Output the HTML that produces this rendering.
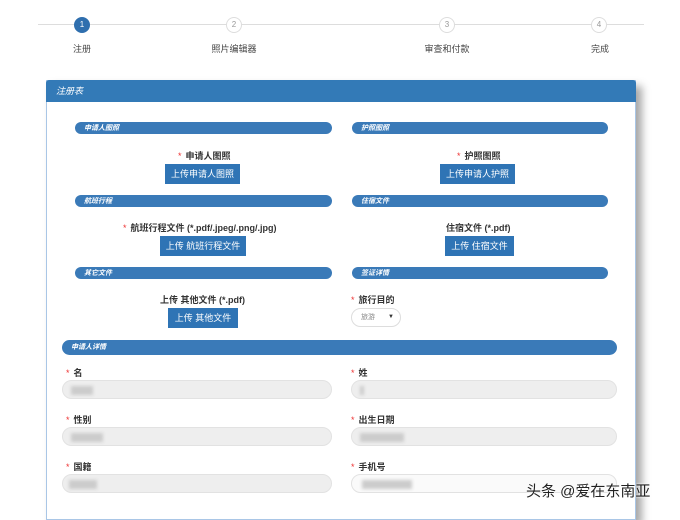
<!DOCTYPE html><html><head><meta charset="utf-8"><style>
*{margin:0;padding:0;box-sizing:border-box}
body{width:680px;height:514px;overflow:hidden;background:#fff;font-family:"Liberation Sans","Noto Sans CJK SC",sans-serif;position:relative;color:#333}
.a{position:absolute}
.c{position:absolute;width:16px;height:16px;border-radius:50%;border:1px solid #ddd;background:#fff;font-size:8px;color:#999;text-align:center;line-height:14px;top:17px}
.sl{position:absolute;font-size:9px;color:#444;top:42px;transform:translateX(-50%)}
.bar{position:absolute;height:12px;background:#3a7ab8;border-radius:6px;color:#fff;font-size:7px;font-style:italic;font-weight:bold;line-height:13px;padding-left:9px}
.btn{position:absolute;height:20px;background:#2f74b5;color:#fff;font-size:9px;line-height:20px;text-align:center}
.lb{position:absolute;font-size:9px;font-weight:bold;color:#333;white-space:nowrap}
.lb i{color:#e33;font-style:normal;margin-right:4px;font-weight:normal}
.in{position:absolute;height:19px;background:#eee;border:1px solid #e2e2e2;border-radius:10px}
.bl{position:absolute;top:5px;height:9px;background:#ccc;filter:blur(1.5px)}
</style></head><body>
<div class="a" style="left:38px;top:24px;width:606px;height:1px;background:#ddd"></div>
<div class="c" style="left:74px;background:#2f6fae;border-color:#2f6fae;color:#fff">1</div>
<div class="c" style="left:226px">2</div>
<div class="c" style="left:439px">3</div>
<div class="c" style="left:591px">4</div>
<div class="sl" style="left:82px">注册</div>
<div class="sl" style="left:234px">照片编辑器</div>
<div class="sl" style="left:447px">审查和付款</div>
<div class="sl" style="left:600px">完成</div>
<div class="a" style="left:46px;top:80px;width:590px;height:440px;border:1px solid #a9c6e6;background:#fff;box-shadow:6px 6px 8px rgba(0,0,0,.35)"></div>
<div class="a" style="left:46px;top:80px;width:590px;height:22px;background:#337ab7;border-radius:3px 3px 0 0;color:#fff;font-size:9px;font-style:italic;line-height:22px;padding-left:10px">注册表</div>
<div class="bar" style="left:75px;top:122px;width:257px">申请人图照</div>
<div class="bar" style="left:352px;top:122px;width:256px">护照图照</div>
<div class="lb" style="left:178px;top:149px"><i>*</i>申请人图照</div>
<div class="lb" style="left:457px;top:149px"><i>*</i>护照图照</div>
<div class="btn" style="left:165px;top:164px;width:75px">上传申请人图照</div>
<div class="btn" style="left:440px;top:164px;width:75px">上传申请人护照</div>
<div class="bar" style="left:75px;top:195px;width:257px">航班行程</div>
<div class="bar" style="left:352px;top:195px;width:256px">住宿文件</div>
<div class="lb" style="left:123px;top:221px"><i>*</i>航班行程文件 (*.pdf/.jpeg/.png/.jpg)</div>
<div class="lb" style="left:446px;top:221px">住宿文件 (*.pdf)</div>
<div class="btn" style="left:160px;top:236px;width:86px">上传 航班行程文件</div>
<div class="btn" style="left:445px;top:236px;width:69px">上传 住宿文件</div>
<div class="bar" style="left:75px;top:267px;width:257px">其它文件</div>
<div class="bar" style="left:352px;top:267px;width:256px">签证详情</div>
<div class="lb" style="left:160px;top:293px">上传 其他文件 (*.pdf)</div>
<div class="lb" style="left:351px;top:293px"><i>*</i>旅行目的</div>
<div class="btn" style="left:168px;top:308px;width:70px">上传 其他文件</div>
<div class="a" style="left:351px;top:308px;width:50px;height:19px;border:1px solid #ddd;border-radius:10px;font-size:7px;color:#888;line-height:17px;padding-left:9px">旅游<span style="position:absolute;right:6px;font-size:6px;color:#333">▼</span></div>
<div class="bar" style="left:62px;top:340px;width:555px;height:15px;line-height:15px;border-radius:8px">申请人详情</div>
<div class="lb" style="left:66px;top:366px"><i>*</i>名</div>
<div class="lb" style="left:351px;top:366px"><i>*</i>姓</div>
<div class="in" style="left:62px;top:380px;width:270px"><div class="bl" style="left:8px;width:22px"></div></div>
<div class="in" style="left:351px;top:380px;width:266px"><div class="bl" style="left:8px;width:4px"></div></div>
<div class="lb" style="left:66px;top:413px"><i>*</i>性别</div>
<div class="lb" style="left:351px;top:413px"><i>*</i>出生日期</div>
<div class="in" style="left:62px;top:427px;width:270px"><div class="bl" style="left:8px;width:32px"></div></div>
<div class="in" style="left:351px;top:427px;width:266px"><div class="bl" style="left:8px;width:44px"></div></div>
<div class="lb" style="left:66px;top:460px"><i>*</i>国籍</div>
<div class="lb" style="left:351px;top:460px"><i>*</i>手机号</div>
<div class="in" style="left:62px;top:474px;width:270px"><div class="bl" style="left:6px;width:28px"></div></div>
<div class="in" style="left:351px;top:474px;width:266px;background:#fafafa"><div class="bl" style="left:10px;width:50px"></div></div>
<div class="a" style="left:526px;top:480px;font-size:15px;color:#222;text-shadow:0 0 2px #fff,0 0 2px #fff;white-space:nowrap">头条 @爱在东南亚</div>
</body></html>
